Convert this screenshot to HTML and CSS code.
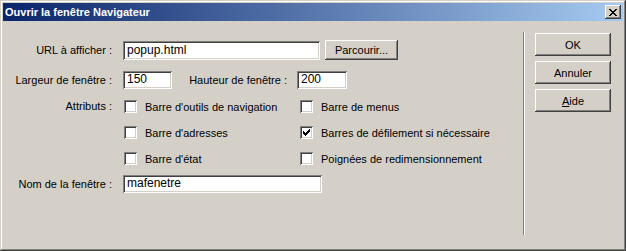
FILE: index.html
```html
<!DOCTYPE html>
<html lang="fr">
<head>
    <meta charset="UTF-8">
    <title>Ouvrir la fenêtre Navigateur</title>
    <link rel="stylesheet" href="styles.css">
</head>
<body>
    <div class="window">
        <div class="titlebar">
            <span class="title">Ouvrir la fenêtre Navigateur</span>
            <div class="close-btn">
                <svg width="8" height="7" viewBox="0 0 8 7">
                    <path d="M0 0h2v1h-2zM6 0h2v1h-2zM1 1h2v1h-2zM5 1h2v1h-2zM2 2h4v1h-4zM3 3h2v1h-2zM2 4h4v1h-4zM1 5h2v1h-2zM5 5h2v1h-2zM0 6h2v1h-2zM6 6h2v1h-2z" fill="#000"/>
                </svg>
            </div>
        </div>

        <div class="content">
            <div class="form">
                <div class="row row-url">
                    <label class="label">URL à afficher :</label>
                    <div class="field field-url">popup.html</div>
                    <div class="button btn-browse">Parcourir...</div>
                </div>

                <div class="row row-size">
                    <label class="label">Largeur de fenêtre :</label>
                    <div class="field field-small">150</div>
                    <label class="label label-height">Hauteur de fenêtre :</label>
                    <div class="field field-small field-h">200</div>
                </div>

                <div class="attrs">
                    <label class="label label-attrs">Attributs :</label>
                    <div class="checks">
                        <div class="check"><span class="box"></span>Barre d'outils de navigation</div>
                        <div class="check"><span class="box"></span>Barre de menus</div>
                        <div class="check"><span class="box"></span>Barre d'adresses</div>
                        <div class="check">
                            <span class="box">
                                <svg width="7" height="7" viewBox="0 0 7 7">
                                    <path d="M6 0h1v3h-1zM5 1h1v3h-1zM4 2h1v3h-1zM3 3h1v3h-1zM2 4h1v3h-1zM1 3h1v3h-1zM0 2h1v3h-1z" fill="#000"/>
                                </svg>
                            </span>Barres de défilement si nécessaire
                        </div>
                        <div class="check"><span class="box"></span>Barre d'état</div>
                        <div class="check"><span class="box"></span>Poignées de redimensionnement</div>
                    </div>
                </div>

                <div class="row row-name">
                    <label class="label">Nom de la fenêtre :</label>
                    <div class="field field-name">mafenetre</div>
                </div>
            </div>

            <div class="separator"></div>

            <div class="actions">
                <div class="button btn-action">OK</div>
                <div class="button btn-action">Annuler</div>
                <div class="button btn-action"><span><u>A</u>ide</span></div>
            </div>
        </div>
    </div>
</body>
</html>
```

FILE: styles.css
```css
* {
    margin: 0;
    padding: 0;
    box-sizing: border-box;
}

body {
    font-family: 'Liberation Sans', Arial, sans-serif;
    font-size: 11px;
    color: #000;
    background: #d4d0c8;
}

.window {
    width: 626px;
    height: 251px;
    padding: 3px;
    background: #d4d0c8;
    display: flex;
    flex-direction: column;
    box-shadow: inset -1px -1px #404040, inset 1px 1px #d4d0c8,
                inset -2px -2px #808080, inset 2px 2px #fff;
}

/* title bar */
.titlebar {
    height: 18px;
    padding: 0 2px 0 2px;
    display: flex;
    align-items: center;
    justify-content: space-between;
    background: linear-gradient(to right, #0a246a, #a6caf0);
}

.title {
    color: #fff;
    font-weight: bold;
    font-size: 11px;
}

.close-btn {
    width: 16px;
    height: 14px;
    display: flex;
    align-items: center;
    justify-content: center;
    background: #d4d0c8;
    box-shadow: inset -1px -1px #404040, inset 1px 1px #fff,
                inset -2px -2px #808080;
}

.close-btn svg {
    display: block;
}

/* main area */
.content {
    flex: 1;
    display: flex;
}

.form {
    width: 520px;
    padding-top: 19px;
}

.row {
    display: flex;
    align-items: center;
}

.label {
    width: 110px;
    text-align: right;
    padding-right: 1px;
    white-space: nowrap;
    flex-shrink: 0;
}

.field {
    height: 19px;
    margin-left: 10px;
    padding: 3px 4px 0 4px;
    background: #fff;
    font-size: 12px;
    line-height: 13px;
    box-shadow: inset 1px 1px #808080, inset -1px -1px #fff,
                inset 2px 2px #404040, inset -2px -2px #d4d0c8;
}

.row-url {
    height: 20px;
}

.field-url {
    width: 197px;
}

.btn-browse {
    width: 73px;
    height: 20px;
    margin-left: 5px;
}

.row-size {
    height: 18px;
    margin-top: 11px;
}

.field-small {
    width: 49px;
    height: 18px;
    padding-top: 2px;
}

.label-height {
    width: 106px;
    margin-left: 10px;
}

.field-h {
    width: 50px;
    margin-left: 9px;
}

/* attributes */
.attrs {
    display: flex;
    margin-top: 11px;
}

.label-attrs {
    line-height: 13px;
}

.checks {
    margin-left: 11px;
    display: grid;
    grid-template-columns: 176px auto;
    grid-auto-rows: 13px;
    row-gap: 13px;
}

.check {
    display: flex;
    align-items: center;
    gap: 8px;
    white-space: nowrap;
}

.box {
    width: 13px;
    height: 13px;
    flex-shrink: 0;
    display: flex;
    align-items: center;
    justify-content: center;
    background: #fff;
    box-shadow: inset 1px 1px #808080, inset -1px -1px #fff,
                inset 2px 2px #404040, inset -2px -2px #d4d0c8;
}

.box svg {
    display: block;
    margin: 0 0 0 0;
}

.row-name {
    height: 18px;
    margin-top: 10px;
}

.field-name {
    width: 199px;
    height: 18px;
    padding-top: 2px;
}

/* separator + buttons */
.separator {
    margin: 11px 0 13px;
    border-left: 1px solid #808080;
    border-right: 1px solid #fff;
}

.actions {
    margin-left: 10px;
    padding-top: 12px;
    display: flex;
    flex-direction: column;
    gap: 5px;
}

.button {
    display: flex;
    align-items: center;
    justify-content: center;
    background: #d4d0c8;
    white-space: nowrap;
    box-shadow: inset -1px -1px #404040, inset 1px 1px #fff,
                inset -2px -2px #808080, inset 2px 2px #d4d0c8;
}

.btn-action {
    width: 76px;
    height: 23px;
}
```
